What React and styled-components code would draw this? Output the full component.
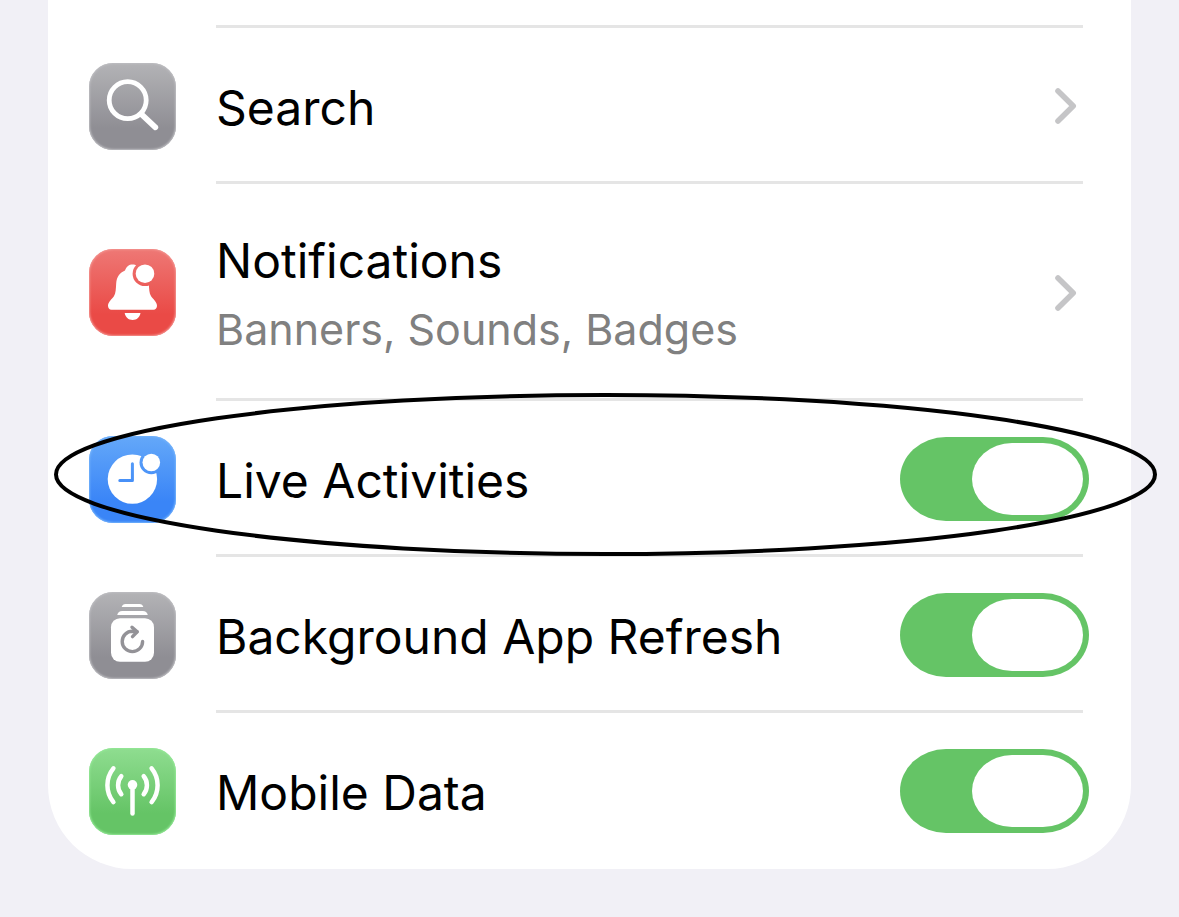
import React, { useState } from 'react'
import styled, { createGlobalStyle } from 'styled-components'

const GlobalStyle = createGlobalStyle`
  body {
    margin: 0;
    background: #f1f0f6;
    font-family: Inter, "Liberation Sans", sans-serif;
    color: #000;
  }
`

const SearchIcon = () => (
  <Glyph viewBox="0 0 87 87" aria-hidden="true">
    <circle cx="38.7" cy="37.2" r="18.5" fill="none" stroke="#fff" strokeWidth="4.8" />
    <path d="M52.6 51.4 66.4 64.4" stroke="#fff" strokeWidth="5.6" strokeLinecap="round" />
  </Glyph>
)

const BellIcon = () => (
  <Glyph viewBox="0 0 87 87" aria-hidden="true">
    <mask id="bell-cut">
      <rect width="87" height="87" fill="#fff" />
      <circle cx="56" cy="24.7" r="12.4" fill="#000" />
    </mask>
    <path
      mask="url(#bell-cut)"
      fill="#fff"
      d="M43.5 15.6c-3.6 0-5.8 1.8-7.5 6-5.200 2.300-8.300 6.300-8.800 12.700-.4 5.600-.3 9.900-2.300 13-1.600 2.600-5.900 5.500-5.900 9.400 0 2.200 1.300 4 3.500 4h42c2.200 0 3.500-1.800 3.500-4 0-3.900-4.300-6.800-5.900-9.400-2-3.100-1.900-7.400-2.300-13-.5-6.400-3.600-10.400-8.800-12.700-1.700-4.200-3.900-6-7.500-6z"
    />
    <circle cx="56" cy="24.7" r="9.3" fill="#fff" />
    <path d="M35.7 64h15.8c-.6 4.2-3.8 7-7.900 7s-7.300-2.800-7.900-7z" fill="#fff" />
  </Glyph>
)

const LiveIcon = () => (
  <Glyph viewBox="0 0 87 87" aria-hidden="true">
    <mask id="clock-cut">
      <rect width="87" height="87" fill="#fff" />
      <circle cx="62.3" cy="26.5" r="11.8" fill="#000" />
      <path d="M43.4 27.8v16.6H30.8" fill="none" stroke="#000" strokeWidth="3" strokeLinecap="round" strokeLinejoin="round" />
    </mask>
    <circle mask="url(#clock-cut)" cx="43.4" cy="43.1" r="24.7" fill="#fff" />
    <circle cx="62.3" cy="26.5" r="8.8" fill="#fff" />
  </Glyph>
)

const RefreshIcon = () => (
  <Glyph viewBox="0 0 87 87" aria-hidden="true">
    <path d="M32.7 15c.6-2 1.8-3 3.8-3h14c2 0 3.2 1 3.8 3z" fill="#fff" />
    <path d="M28.2 23c.7-2.7 2.3-4 5-4h20.6c2.7 0 4.3 1.3 5 4z" fill="#fff" />
    <rect x="22" y="26.2" width="43" height="43.6" rx="9" fill="#fff" />
    <g fill="none" stroke="#939297" strokeWidth="3.4" strokeLinecap="round" strokeLinejoin="round">
      <path d="M53.6 49.4a10.2 10.2 0 1 1-10.2-10.2l4.6.6" />
      <path d="M43 35.2 48.2 39.8 43.5 44.6" />
    </g>
  </Glyph>
)

const AntennaIcon = () => (
  <Glyph viewBox="0 0 87 87" aria-hidden="true">
    <circle cx="43.5" cy="36.8" r="4.8" fill="#fff" />
    <g fill="none" stroke="#fff" strokeWidth="4.5" strokeLinecap="round">
      <path d="M43.5 38v27.6" />
      <path d="M32.3 28.2c-4.3 5-4.3 13 0 18" />
      <path d="M54.7 28.2c4.3 5 4.3 13 0 18" />
      <path d="M24.4 20.3c-8 9.8-8 24 0 33.8" />
      <path d="M62.6 20.3c8 9.8 8 24 0 33.8" />
    </g>
  </Glyph>
)

const Chevron = () => (
  <ChevronSvg viewBox="0 0 22 36" aria-hidden="true">
    <path d="M3 3 18.2 18 3 33" fill="none" stroke="#c5c5c7" strokeWidth="5.6" strokeLinecap="round" strokeLinejoin="round" />
  </ChevronSvg>
)

const links = [
  { id: 'search', title: 'Search', tone: 'gray', icon: <SearchIcon /> },
  { id: 'notifications', title: 'Notifications', detail: 'Banners, Sounds, Badges', tone: 'red', icon: <BellIcon /> },
]

const switches = [
  { id: 'live', title: 'Live Activities', tone: 'blue', icon: <LiveIcon />, circled: true },
  { id: 'refresh', title: 'Background App Refresh', tone: 'gray', icon: <RefreshIcon /> },
  { id: 'mobile', title: 'Mobile Data', tone: 'green', icon: <AntennaIcon /> },
]

const App = () => {
  const [on, setOn] = useState({ live: true, refresh: true, mobile: true })

  return (
    <>
      <GlobalStyle />
      <Page>
        <Card>
          <RowTail />
          {links.map(({ id, title, detail, tone, icon }) => (
            <Row as="a" href={`#${id}`} key={id} $tall={!!detail}>
              <Tile $tone={tone}>{icon}</Tile>
              <Body>
                <Labels>
                  <Title>{title}</Title>
                  {detail && <Detail>{detail}</Detail>}
                </Labels>
                <Chevron />
              </Body>
            </Row>
          ))}
          {switches.map(({ id, title, tone, icon, circled }) => (
            <Row as="label" htmlFor={id} key={id}>
              <Tile $tone={tone}>{icon}</Tile>
              <Body>
                <Title>{title}</Title>
                <Switch
                  id={id}
                  checked={on[id]}
                  onChange={event => setOn({ ...on, [id]: event.target.checked })}
                />
              </Body>
              {circled && (
                <Ring aria-hidden="true">
                  <svg>
                    <ellipse cx="50%" cy="50%" />
                  </svg>
                </Ring>
              )}
            </Row>
          ))}
        </Card>
      </Page>
    </>
  )
}

const tones = {
  gray: { top: '#b3b3b6', bottom: '#8f8e94', edge: '#bdbdc1' },
  red: { top: '#ee7875', bottom: '#ea4a46', edge: '#f3938f' },
  blue: { top: '#64a8f9', bottom: '#3a85f7', edge: '#74b3fb' },
  green: { top: '#8fdd90', bottom: '#65c466', edge: '#93e896' },
}

const Page = styled.main`
  padding: 0 48px 48px;
`

const Card = styled.section`
  background: #fff;
  border-radius: 0 0 84px 84px;
`

const Body = styled.div`
  flex: 1;
  display: flex;
  align-items: center;
  justify-content: space-between;
  min-width: 0;
  box-shadow: inset 0 -3px #e5e5e5;
`

/* end of the row that is scrolled out of view */
const RowTail = styled.div`
  height: 25px;
  margin: 0 48px 0 168px;
  border-bottom: 3px solid #e5e5e5;
`

const Row = styled.div`
  position: relative;
  display: flex;
  align-items: center;
  gap: 40px;
  min-height: ${props => (props.$tall ? '217px' : '156px')};
  padding: 0 48px 0 41px;
  color: inherit;
  text-decoration: none;
  cursor: pointer;

  ${Body} {
    align-self: stretch;
  }

  &:last-child ${Body} {
    box-shadow: none;
  }
`

const Tile = styled.span`
  flex: none;
  width: 87px;
  height: 87px;
  border-radius: 24px;
  background: linear-gradient(
    ${props => tones[props.$tone].top},
    ${props => tones[props.$tone].bottom} 75%
  );
  box-shadow: inset 0 0 2px 1px ${props => tones[props.$tone].edge};
`

const Glyph = styled.svg`
  display: block;
  width: 100%;
  height: 100%;
`

const Labels = styled.span`
  display: flex;
  flex-direction: column;
  gap: 7px;
`

const Title = styled.span`
  font-size: 48px;
  line-height: 62px;
  padding-top: 3px;
`

const Detail = styled.span`
  font-size: 43px;
  line-height: 60px;
  color: #808080;
`

const ChevronSvg = styled.svg`
  flex: none;
  width: 22px;
  height: 36px;
  margin-right: 6px;
`

const Switch = styled.input.attrs({ type: 'checkbox', role: 'switch' })`
  appearance: none;
  flex: none;
  display: flex;
  justify-content: flex-start;
  box-sizing: border-box;
  width: 189px;
  height: 84px;
  margin: 0 -6px 0 0;
  padding: 6px;
  border-radius: 46px / 42px;
  background: #e4e4e6;
  cursor: pointer;

  &::before {
    content: '';
    width: 111px;
    height: 72px;
    border-radius: 40px / 36px;
    background: #fff;
  }

  &:checked {
    justify-content: flex-end;
    background: #65c466;
  }
`

/* highlight around a row, spills past the card on the right */
const Ring = styled.span`
  position: absolute;
  top: -8px;
  right: -26px;
  bottom: 1px;
  left: 6px;
  pointer-events: none;

  svg {
    display: block;
    width: 100%;
    height: 100%;
  }

  ellipse {
    rx: calc(50% - 2px);
    ry: calc(50% - 2px);
    fill: none;
    stroke: #000;
    stroke-width: 4px;
  }
`

export default App
